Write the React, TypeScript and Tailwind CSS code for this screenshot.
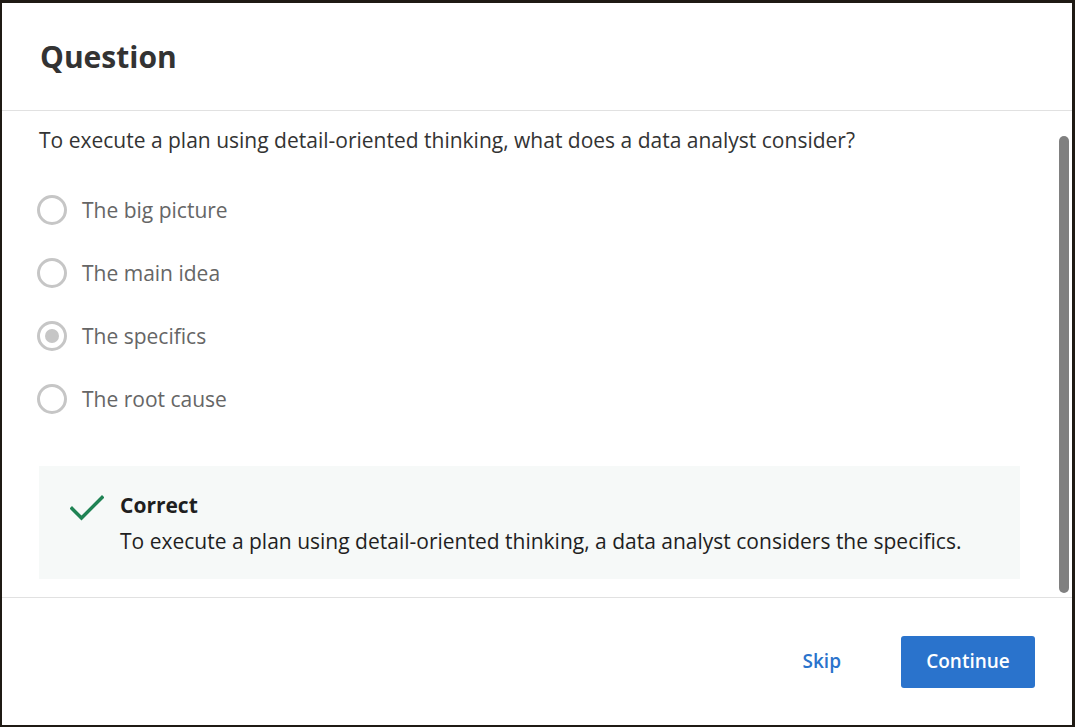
const options = ['The big picture', 'The main idea', 'The specifics', 'The root cause'];

function Radio({ checked }: { checked: boolean }) {
  return (
    <span className="flex h-[30px] w-[30px] shrink-0 items-center justify-center rounded-full border-[3px] border-[#c6c6c6] bg-white">
      {checked && <span className="h-[14px] w-[14px] rounded-full bg-[#c6c6c6]" />}
    </span>
  );
}

function CheckMark() {
  return (
    <svg width="34" height="26" viewBox="0 0 34 26" className="mt-[4px] shrink-0" fill="none">
      <path d="M2 13.5 11.5 23 32 2.5" stroke="#1f8354" strokeWidth="3.4" strokeLinecap="square" />
    </svg>
  );
}

export default function App() {
  return (
    <div className="h-[727px] w-[1075px] bg-[#1f1a14] pb-[2px] pl-[2px] pr-[3px] pt-[3px] font-['Open_Sans',sans-serif]">
      <div className="flex h-full w-full flex-col bg-white">
        <div className="flex h-[108px] shrink-0 items-center border-b border-[#e1e1e1] px-[38px]">
          <h2 className="text-[30px] font-bold text-[#333]">Question</h2>
        </div>

        <div className="relative flex-1 overflow-hidden">
          <div className="px-[37px] pt-[15px]">
            <p className="text-[21px] leading-[28px] text-[#333]">
              To execute a plan using detail-oriented thinking, what does a data analyst consider?
            </p>
            <div className="mt-[41px] flex flex-col gap-[33px]">
              {options.map((opt, i) => (
                <label key={opt} className="-ml-[2px] flex items-center gap-[15px]">
                  <Radio checked={i === 2} />
                  <span className="text-[21px] leading-[30px] text-[#666]">{opt}</span>
                </label>
              ))}
            </div>
            <div className="mr-[15px] mt-[52px] flex gap-[16px] bg-[#f6f9f8] pb-[24px] pl-[31px] pt-[25px]">
              <CheckMark />
              <div>
                <div className="text-[21px] font-bold leading-[28px] text-[#1f1f1f]">Correct</div>
                <div className="mt-[8px] text-[21px] leading-[28px] text-[#1f1f1f]">
                  To execute a plan using detail-oriented thinking, a data analyst considers the specifics.
                </div>
              </div>
            </div>
          </div>
          <div className="absolute right-[3px] top-[25px] h-[457px] w-[10px] rounded-full bg-[#808080]" />
        </div>

        <div className="flex h-[128px] shrink-0 items-center justify-end gap-[60px] border-t border-[#e1e1e1] pr-[37px]">
          <button className="text-[19px] font-semibold text-[#2a73cc]">Skip</button>
          <button className="h-[52px] w-[134px] rounded-[3px] bg-[#2a73cc] text-[19px] font-semibold text-white">
            Continue
          </button>
        </div>
      </div>
    </div>
  );
}
